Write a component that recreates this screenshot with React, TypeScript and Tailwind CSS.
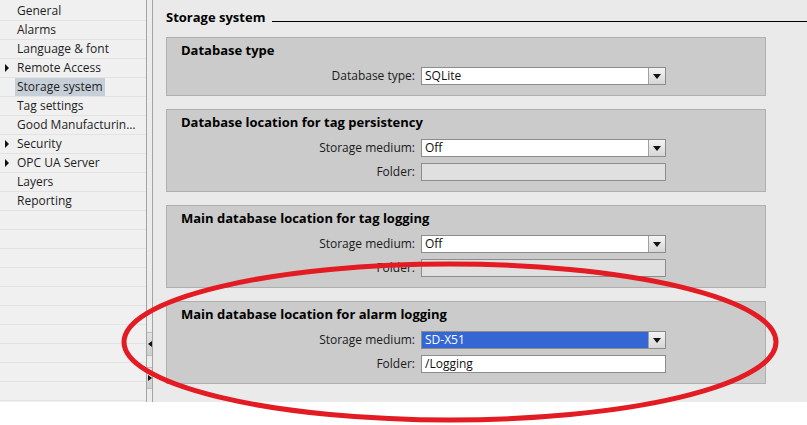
import React from "react";

type NavItem = {
  label: string;
  expandable?: boolean;
  selected?: boolean;
};

const navItems: NavItem[] = [
  { label: "General" },
  { label: "Alarms" },
  { label: "Language & font" },
  { label: "Remote Access", expandable: true },
  { label: "Storage system", selected: true },
  { label: "Tag settings" },
  { label: "Good Manufacturin…" },
  { label: "Security", expandable: true },
  { label: "OPC UA Server", expandable: true },
  { label: "Layers" },
  { label: "Reporting" },
];

type Field = {
  label: string;
  value: string;
  kind: "select" | "text" | "disabled";
  highlighted?: boolean;
};

type Group = {
  title: string;
  fields: Field[];
};

const groups: Group[] = [
  {
    title: "Database type",
    fields: [{ label: "Database type:", value: "SQLite", kind: "select" }],
  },
  {
    title: "Database location for tag persistency",
    fields: [
      { label: "Storage medium:", value: "Off", kind: "select" },
      { label: "Folder:", value: "", kind: "disabled" },
    ],
  },
  {
    title: "Main database location for tag logging",
    fields: [
      { label: "Storage medium:", value: "Off", kind: "select" },
      { label: "Folder:", value: "", kind: "disabled" },
    ],
  },
  {
    title: "Main database location for alarm logging",
    fields: [
      { label: "Storage medium:", value: "SD-X51", kind: "select", highlighted: true },
      { label: "Folder:", value: "/Logging", kind: "text" },
    ],
  },
];

function FieldInput({ field }: { field: Field }) {
  const bg =
    field.kind === "disabled"
      ? "bg-[#e0e0e0]"
      : field.highlighted
      ? "bg-[#3467d3] text-white"
      : "bg-white text-[#111]";

  return (
    <div className={`flex h-[18px] w-[245px] items-stretch border border-[#8c8c8c] ${bg}`}>
      <div className="flex flex-1 items-center pl-[3px] text-[12px] leading-none">{field.value}</div>
      {field.kind === "select" && (
        <div className="flex w-[17px] items-center justify-center border-l border-[#a0a0a0] bg-gradient-to-b from-[#f4f4f4] to-[#d6d6d6]">
          <svg width="8" height="5" viewBox="0 0 8 5">
            <path d="M0 0 H8 L4 5 Z" fill="#111" />
          </svg>
        </div>
      )}
    </div>
  );
}

function GroupBox({ group }: { group: Group }) {
  return (
    <div className="border border-[#afafaf] bg-[#cbcbcb] pt-[4px] pb-[10px]">
      <div className="pl-[14px] text-[13px] font-bold leading-[16px] text-black">{group.title}</div>
      <div className="mt-[9px] flex flex-col gap-[6px]">
        {group.fields.map((field, i) => (
          <div key={i} className="flex items-center">
            <div className="w-[248px] text-right text-[12px] leading-none text-[#1a1a1a]">{field.label}</div>
            <div className="ml-[6px]">
              <FieldInput field={field} />
            </div>
          </div>
        ))}
      </div>
    </div>
  );
}

function Splitter() {
  return (
    <div className="flex w-[7px] flex-col border-l border-r border-[#a3a3a3] bg-[#ececec]">
      <div className="h-[332px]" />
      {/* Collapse button */}
      <div className="flex h-[24px] items-center border-t border-b border-[#bdbdbd] bg-gradient-to-b from-[#e2e2e2] to-[#cfcfcf]">
        <svg width="4" height="6" viewBox="0 0 4 6" className="ml-[1px]">
          <path d="M4 0 V6 L0 3 Z" fill="#111" />
        </svg>
      </div>
      <div className="h-[11px]" />
      {/* Expand button */}
      <div className="flex h-[22px] items-center border-t border-b border-[#bdbdbd] bg-gradient-to-b from-[#e2e2e2] to-[#cfcfcf]">
        <svg width="4" height="6" viewBox="0 0 4 6" className="ml-[1px]">
          <path d="M0 0 V6 L4 3 Z" fill="#111" />
        </svg>
      </div>
      <div className="flex-1" />
    </div>
  );
}

export default function App() {
  return (
    <div
      className="relative h-[425px] w-[807px] overflow-hidden bg-white"
      style={{ fontFamily: '"Open Sans", "Noto Sans", sans-serif' }}
    >
      <div className="flex h-[402px]">
        {/* Navigation tree */}
        <div className="w-[146px] bg-[#f0f0f0] pt-[2px]">
          {navItems.map((item) => (
            <div key={item.label} className="relative flex h-[19px] items-center border-b border-[#e3e3e3]">
              {item.expandable && (
                <svg width="4" height="8" viewBox="0 0 4 8" className="absolute left-[5px] top-[5px]">
                  <path d="M0 0 V8 L4 4 Z" fill="#111" />
                </svg>
              )}
              <span
                className={`ml-[15px] px-[2px] text-[12px] leading-[18px] text-[#1e1e1e] ${
                  item.selected ? "bg-[#c6ced8]" : ""
                }`}
              >
                {item.label}
              </span>
            </div>
          ))}
          {Array.from({ length: 10 }).map((_, i) => (
            <div key={i} className="h-[19px] border-b border-[#e3e3e3]" />
          ))}
        </div>

        <Splitter />

        {/* Content */}
        <div className="flex-1 bg-[#eaeaea] pt-[9px] pl-[13px]">
          <div className="flex items-end">
            <div className="text-[13px] font-bold leading-[17px] text-black">Storage system</div>
            <div className="mb-[4px] ml-[7px] flex-1 border-b border-black" />
          </div>
          <div className="mt-[11px] flex w-[600px] flex-col gap-[13px]">
            {groups.map((group) => (
              <GroupBox key={group.title} group={group} />
            ))}
          </div>
        </div>
      </div>

      {/* Red annotation ellipse */}
      <svg className="pointer-events-none absolute left-0 top-0" width="807" height="425" viewBox="0 0 807 425">
        <ellipse cx="450" cy="342" rx="326" ry="78" fill="none" stroke="#e31b23" strokeWidth="5" />
      </svg>
    </div>
  );
}
